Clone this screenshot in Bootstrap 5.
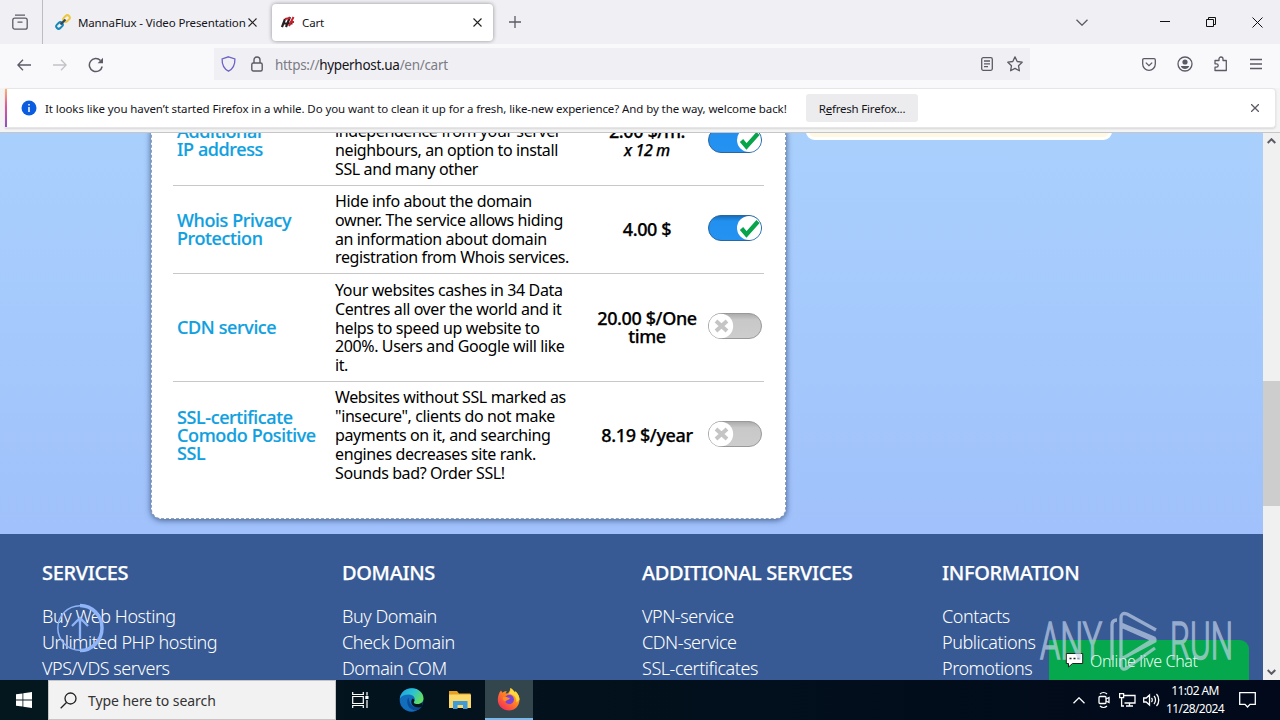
<!DOCTYPE html>
<html lang="en">
<head>
  <meta charset="UTF-8">
  <title>Cart</title>
  <meta name="viewport" content="width=device-width, initial-scale=1" />
  <link href="https://cdn.jsdelivr.net/npm/bootstrap@5.3.0/dist/css/bootstrap.min.css" rel="stylesheet" />
  <style>
    body {
      width: 1280px;
      height: 720px;
      overflow: hidden;
      font-family: "Noto Sans", sans-serif;
      font-size: 12px;
      line-height: 1.2;
      color: #15141a;
      background: #f7f7f8;
    }
    svg {
      display: block;
      flex: none;
      fill: none;
      stroke: #5b5b66;
      stroke-width: 1.3;
    }
    .text-line { white-space: nowrap; }

    /* browser chrome */
    .tab-strip { height: 44px; background: #f0f0f4; }
    .tab-pin { width: 43px; border-right: 1px solid #bcbcc4; padding-left: 12px; }
    .tab-item { height: 37px; font-size: 11.5px; letter-spacing: -0.13px; }
    .tab-back { width: 229px; padding-left: 12px; }
    .tab-title { width: 170px; margin-left: 7px; padding-top: 1px; }
    .tab-front {
      width: 221px;
      padding: 0 11px 0 9px;
      background: #fff;
      border-radius: 4px;
      box-shadow: 0 0 4px rgba(0, 0, 0, 0.4);
    }
    .tab-close { stroke: #222; stroke-width: 1.1; }
    .win-icon { stroke: #111; stroke-width: 1; }
    .tool-strip { height: 44px; background: #f9f9fb; }
    .address-box { width: 816px; height: 32px; margin-top: 4px; background: #f0f0f4; font-size: 13.5px; letter-spacing: -0.3px; color: #7c7c85; }
    .address-box b { font-weight: 400; color: #15141a; }
    .notice-strip { height: 45px; padding: 0 4px 4px 5px; border-bottom: 1px solid #c4c6ca; background: #f4f4f5; }
    .notice-box {
      height: 40px;
      background: #fff;
      border: 1px solid #e6e6e8;
      border-left: 0;
      border-radius: 0 4px 4px 0;
      box-shadow: 0 1px 2px rgba(0, 0, 0, 0.12);
      font-size: 11.5px;
    }
    .notice-edge { width: 2px; height: 38px; background: linear-gradient(#ffb26e, #e0559a 45%, #8a50c8); }
    .notice-text { width: 752px; margin-left: 8px; padding-top: 2px; letter-spacing: -0.095px; }
    .notice-btn { width: 112px; height: 28px; margin-left: 9px; padding-top: 2px; background: #ececee; border-radius: 3px; letter-spacing: -0.2px; }

    /* page */
    .page-view { height: 547px; }
    .page-area { width: 1263px; overflow: hidden; background: linear-gradient(#a9d0fd, #a0c1fb 401px); }
    .page-main { height: 401px; padding-left: 151px; }
    .order-box {
      width: 635px;
      height: 396px;
      margin-top: -10px;
      padding: 0 21px;
      overflow: hidden;
      background: #fff;
      border: 1px dashed #8ba3b2;
      border-radius: 10px;
      box-shadow: 0 1px 6px rgba(20, 40, 90, 0.7);
    }
    .order-row {
      display: grid;
      grid-template-columns: 158px 256px 112px 1fr;
      align-items: center;
      padding-left: 4px;
      width: 591px;
      border-bottom: 1px solid #c8c8c8;
      color: #000;
    }
    .order-row svg { margin: 0 0 4px 4px; }
    .row-ip { height: 89px; margin-top: -27px; }
    .row-whois { height: 88px; }
    .row-cdn { height: 108px; }
    .row-ssl { height: 107px; border: 0; }
    .svc-name { padding-bottom: 2px; font-size: 18px; line-height: 18px; font-weight: 500; letter-spacing: -0.38px; color: #109fe0; -webkit-text-stroke: 0.2px #109fe0; }
    .svc-text { font-size: 16px; line-height: 18.9px; letter-spacing: -0.39px; }
    .svc-price { padding-bottom: 2px; font-size: 18px; line-height: 18px; font-weight: 500; letter-spacing: -0.38px; text-align: center; -webkit-text-stroke: 0.25px #000; }
    .svc-price em { font-size: 16px; }
    .tip-box { width: 306px; height: 17px; margin: -10px 0 0 20px; background: #fff9e4; border: 3px solid #fff; border-radius: 12px; }
    .site-footer { height: 146px; padding: 27px 0 0 42px; background: #375a94; color: #fff; }
    .foot-col { width: 300px; flex: none; }
    .foot-head { font-size: 20px; line-height: 24px; font-weight: 500; letter-spacing: -0.34px; margin-bottom: 18px; -webkit-text-stroke: 0.25px #fff; }
    .foot-link { font-size: 18px; line-height: 26px; font-weight: 300; letter-spacing: -0.45px; }
    .scroll-rail { width: 17px; background: #f0f0f0; }
    .scroll-thumb { height: 125px; margin-top: 232px; background: #cdcdcd; }

    /* things that float over the page */
    .float-up { left: 56px; top: 603px; }
    .chat-tab {
      left: 1049px;
      top: 640px;
      width: 200px;
      height: 40px;
      padding-left: 16px;
      background: #05a84c;
      border-radius: 0 9px 0 0;
      color: #e9fff2;
      font-size: 16px;
      font-weight: 300;
      letter-spacing: -0.35px;
    }
    .chat-label { padding-left: 6px; }
    .stamp { left: 1036px; top: 606px; }

    /* taskbar */
    .task-strip { height: 40px; background: linear-gradient(90deg, #04171f, #020f1c 60%, #01091a); color: #fff; }
    .task-search { width: 288px; height: 40px; background: #f2f2f2; border: 1px solid #c5c5c5; color: #333; font-size: 14px; letter-spacing: -0.06px; }
    .task-app { width: 48px; height: 40px; margin-left: 1px; }
    .task-live { background: #33454d; border-bottom: 2px solid #76b9ed; }
    .task-strip .line-icon { stroke: #fff; }
    .clock { width: 62px; margin-left: 4px; font-size: 12px; line-height: 18px; letter-spacing: -0.6px; text-align: center; }
  </style>
</head>
<body class="d-flex flex-column">

<svg width="0" height="0" class="position-absolute">
  <defs>
    <linearGradient id="offShade" x2="0" y2="1"><stop offset="0" stop-color="#aaa"/><stop offset=".25" stop-color="#c8c8c8"/><stop offset="1" stop-color="#cdcdcd"/></linearGradient>
    <linearGradient id="onShade" x2="0" y2="1"><stop offset="0" stop-color="#1769b4"/><stop offset=".22" stop-color="#2190ef"/><stop offset="1" stop-color="#2592f2"/></linearGradient>
    <linearGradient id="foxShade" x1="1" x2=".2" y2="1"><stop offset="0" stop-color="#ffe14a"/><stop offset=".45" stop-color="#ff8a1f"/><stop offset="1" stop-color="#f5295b"/></linearGradient>
    <linearGradient id="edgeShade" x2="1" y2=".5"><stop offset="0" stop-color="#1b9de2"/><stop offset=".55" stop-color="#2cc3d0"/><stop offset="1" stop-color="#62dc62"/></linearGradient>
    <symbol id="toggleOn" viewBox="0 0 56 28">
      <rect x="1.500" y="1.500" width="53" height="25" rx="12.500" fill="url(#onShade)" stroke="#28679f" stroke-width="1"/>
      <circle cx="42" cy="14" r="12" fill="#fff" stroke="none"/>
      <path d="M34.500 14.500l5 6L51 7.500" stroke="#06a44b" stroke-width="4.300"/>
    </symbol>
    <symbol id="toggleOff" viewBox="0 0 56 28">
      <rect x="1.500" y="1.500" width="53" height="25" rx="12.500" fill="url(#offShade)" stroke="#999" stroke-width="1"/>
      <circle cx="14" cy="14" r="12.200" fill="#fff" stroke="none"/>
      <path d="M9 9l11 10M20 9L9 19" stroke="#c5c5c5" stroke-width="4"/>
    </symbol>
  </defs>
</svg>

<div class="tab-strip d-flex align-items-center">
  <div class="tab-pin h-100 d-flex align-items-center">
    <svg width="16" height="16" viewBox="0 0 16 16"><rect x=".8" y="4.200" width="14.400" height="11" rx="2"/><path d="M3 1.200h10M5.500 8.200h5"/></svg>
  </div>
  <div class="tab-item tab-back d-flex align-items-center">
    <svg width="16" height="16" viewBox="0 0 16 16"><rect x="-3.600" y="-2.400" width="7.200" height="4.800" rx="2.400" transform="translate(4.500 11.500) rotate(-45)" stroke="#1788b8" stroke-width="2"/><rect x="-3.600" y="-2.400" width="7.200" height="4.800" rx="2.400" transform="translate(11.500 4.500) rotate(-45)" stroke="#edc83c" stroke-width="2"/><path d="M5.500 10.500l5-5" stroke="#34475b" stroke-width="2.200"/></svg>
    <span class="text-line tab-title">MannaFlux - Video Presentation</span>
    <svg class="tab-close" width="9" height="9" viewBox="0 0 9 9"><path d="M.5.5l8 8M8.500.5l-8 8"/></svg>
  </div>
  <div class="tab-item tab-front d-flex align-items-center">
    <svg width="14" height="12" viewBox="0 0 14 12"><path d="M1 11L4 3M5 11l4-10M1.500 7.500h10" stroke="#2a2023" stroke-width="2.200"/><path d="M8 10l4.500-9M4 3l5-1M9 6h4" stroke="#c8202c" stroke-width="2"/></svg>
    <span class="text-line flex-grow-1" style="padding:1px 0 0 7px">Cart</span>
    <svg class="tab-close" width="9" height="9" viewBox="0 0 9 9"><path d="M.5.5l8 8M8.500.5l-8 8"/></svg>
  </div>
  <svg class="ms-3" width="12" height="12" viewBox="0 0 12 12"><path d="M6 0v12M0 6h12"/></svg>
  <div class="ms-auto d-flex align-items-center">
    <svg width="12" height="7" viewBox="0 0 12 7"><path d="M.5.7L6 6.200 11.500.7"/></svg>
    <svg class="win-icon" width="11" height="11" viewBox="0 0 11 11" style="margin-left:72px"><path d="M0 4.500h10"/></svg>
    <svg class="win-icon" width="11" height="11" viewBox="0 0 11 11" style="margin-left:35px"><path d="M.5 2.500h7v7h-7zM2.500 2.500v-2h7v7h-2"/></svg>
    <svg class="win-icon" width="11" height="11" viewBox="0 0 11 11" style="margin:0 17px 0 35px"><path d="M.5.5l10 10M10.500.5l-10 10"/></svg>
  </div>
</div>

<div class="tool-strip d-flex">
  <div class="d-flex align-items-center" style="width:214px;padding:0 0 3px 17px">
    <svg width="14" height="12" viewBox="0 0 14 12"><path d="M14 6H1M6 .7L.9 6 6 11.300"/></svg>
    <svg width="14" height="12" viewBox="0 0 14 12" style="margin-left:22px;stroke:#c2c2c8"><path d="M0 6h13M8 .7L13.100 6 8 11.300"/></svg>
    <svg width="16" height="16" viewBox="0 0 16 16" style="margin-left:21px;stroke-width:1.500"><path d="M14.200 9.500A6.500 6.500 0 1 1 12.500 3.500"/><path d="M15 .8v5.400H9.600z" fill="#5b5b66" stroke="none"/></svg>
  </div>
  <div class="address-box d-flex align-items-center">
    <svg width="15" height="16" viewBox="0 0 15 16" style="margin-left:7px;stroke:#6c63c9"><path d="M7.500.8L13.900 3c.2 6-1.400 9.600-6.400 12.200C2.500 12.600.9 9 1.100 3z"/></svg>
    <svg width="12" height="16" viewBox="0 0 12 16" style="margin-left:15px;stroke-width:1.400"><rect x=".8" y="7" width="10.400" height="8" rx="1.500"/><path d="M3 7V4a3 3 0 0 1 6 0v3"/></svg>
    <span class="text-line ms-2 ps-1 flex-grow-1" style="padding-top:2px">https://<b>hyperhost.ua</b>/en/cart</span>
    <svg width="12" height="14" viewBox="0 0 12 14"><rect x=".7" y=".7" width="10.600" height="12.600" rx="1.500"/><path d="M3 4h6M3 6.800h6M3 9.600h4"/></svg>
    <svg width="16" height="16" viewBox="0 0 16 16" style="margin:0 7px 0 14px"><path stroke-linejoin="round" d="M8 .9l2.200 4.600 5 .7-3.700 3.500.9 5.100L8 12.400l-4.400 2.400.9-5.100L.8 6.200l5-.7z"/></svg>
  </div>
  <div class="ms-auto d-flex align-items-center pb-1">
    <svg width="14" height="13" viewBox="0 0 14 13"><path d="M2 .7h10c.8 0 1.300.5 1.300 1.300V6a6.300 6.300 0 0 1-12.600 0V2C.7 1.200 1.200.7 2 .7zM3.800 4.600L7 7.600l3.200-3"/></svg>
    <svg width="16" height="16" viewBox="0 0 16 16" style="margin-left:21px"><circle cx="8" cy="8" r="7"/><circle cx="8" cy="6" r="2.600" fill="#5b5b66" stroke="none"/><path d="M3.800 10h8.400c-1 4-7.400 4-8.400 0z" fill="#5b5b66" stroke="none"/></svg>
    <svg width="14" height="16" viewBox="0 0 14 16" style="margin-left:21px"><path stroke-linejoin="round" d="M1 4.500h4V3a2 2 0 0 1 4 0v1.500h3.300v10H1v-3.300h1.500a1.700 1.700 0 0 0 0-3.400H1z"/></svg>
    <svg width="12" height="12" viewBox="0 0 12 12" style="margin:0 18px 0 22px"><path d="M0 1.500h12M0 6h12M0 10.500h12"/></svg>
  </div>
</div>

<div class="notice-strip">
  <div class="notice-box d-flex align-items-center">
    <div class="notice-edge"></div>
    <svg width="16" height="16" viewBox="0 0 16 16" style="margin-left:14px"><circle cx="8" cy="8" r="7.500" fill="#0a5de0" stroke="none"/><path d="M8 4v1.600M8 7v5" stroke="#fff" stroke-width="1.500"/></svg>
    <span class="text-line notice-text">It looks like you haven’t started Firefox in a while. Do you want to clean it up for a fresh, like-new experience? And by the way, welcome back!</span>
    <div class="notice-btn text-line d-flex align-items-center justify-content-center"><span>R<u>e</u>fresh Firefox...</span></div>
    <svg class="ms-auto me-3" width="8" height="8" viewBox="0 0 8 8"><path d="M0 0l8 8M8 0L0 8"/></svg>
  </div>
</div>

<div class="page-view d-flex">
  <div class="page-area">
    <div class="page-main d-flex align-items-start">
      <div class="order-box">
        <div class="order-row row-ip">
          <div class="svc-name">Additional<br>IP address</div>
          <div class="svc-text text-line"><br>independence from your server<br>neighbours, an option to install<br>SSL and many other</div>
          <div class="svc-price">2.00 $/m.<br><em>x 12 m</em></div>
          <svg width="56" height="28" style="margin-bottom:2px"><use href="#toggleOn"/></svg>
        </div>
        <div class="order-row row-whois">
          <div class="svc-name">Whois Privacy<br>Protection</div>
          <div class="svc-text text-line">Hide info about the domain<br>owner. The service allows hiding<br>an information about domain<br>registration from Whois services.</div>
          <div class="svc-price">4.00 $</div>
          <svg width="56" height="28"><use href="#toggleOn"/></svg>
        </div>
        <div class="order-row row-cdn">
          <div class="svc-name">CDN service</div>
          <div class="svc-text text-line" style="padding-top:1px">Your websites cashes in 34 Data<br>Centres all over the world and it<br>helps to speed up website to<br>200%. Users and Google will like<br>it.</div>
          <div class="svc-price">20.00 $/One<br>time</div>
          <svg width="56" height="28"><use href="#toggleOff"/></svg>
        </div>
        <div class="order-row row-ssl">
          <div class="svc-name text-line">SSL-certificate<br>Comodo Positive<br>SSL</div>
          <div class="svc-text text-line">Websites without SSL marked as<br>"insecure", clients do not make<br>payments on it, and searching<br>engines decreases site rank.<br>Sounds bad? Order SSL!</div>
          <div class="svc-price">8.19 $/year</div>
          <svg width="56" height="28"><use href="#toggleOff"/></svg>
        </div>
      </div>
      <div class="tip-box"></div>
    </div>
    <div class="site-footer d-flex">
      <div class="foot-col">
        <div class="foot-head">SERVICES</div>
        <div class="foot-link">Buy Web Hosting</div>
        <div class="foot-link">Unlimited PHP hosting</div>
        <div class="foot-link">VPS/VDS servers</div>
      </div>
      <div class="foot-col">
        <div class="foot-head">DOMAINS</div>
        <div class="foot-link">Buy Domain</div>
        <div class="foot-link">Check Domain</div>
        <div class="foot-link">Domain COM</div>
      </div>
      <div class="foot-col">
        <div class="foot-head">ADDITIONAL SERVICES</div>
        <div class="foot-link">VPN-service</div>
        <div class="foot-link">CDN-service</div>
        <div class="foot-link">SSL-certificates</div>
      </div>
      <div class="foot-col">
        <div class="foot-head">INFORMATION</div>
        <div class="foot-link">Contacts</div>
        <div class="foot-link">Publications</div>
        <div class="foot-link">Promotions</div>
      </div>
    </div>
  </div>
  <div class="scroll-rail d-flex flex-column align-items-center">
    <svg width="9" height="6" viewBox="0 0 9 6" style="margin-top:5px;margin-bottom:5px;stroke-width:2"><path d="M.7 5l3.800-3.800L8.300 5"/></svg>
    <div class="scroll-thumb w-100"></div>
    <svg class="mt-auto" width="9" height="6" viewBox="0 0 9 6" style="margin-bottom:5px;stroke-width:2"><path d="M.7 1l3.800 3.800L8.300 1"/></svg>
  </div>
</div>

<div class="task-strip d-flex align-items-center">
  <svg width="16" height="16" viewBox="0 0 16 16" style="margin:0 16px 0 16px;fill:#fff;stroke:none"><path d="M0 2.300l6.500-.9v6.200H0zM7.300 1.300L16 0v7.600H7.300zM0 8.400h6.500v6.200L0 13.700zM7.300 8.400H16V16l-8.700-1.300z"/></svg>
  <div class="task-search d-flex align-items-center">
    <svg width="17" height="17" viewBox="0 0 17 17" style="margin:0 11px;stroke:#222"><circle cx="10.500" cy="6.500" r="5.500"/><path d="M6.500 10.500L.7 16.300"/></svg>
    <span class="text-line" style="padding-top:2px">Type here to search</span>
  </div>
  <div class="task-app d-flex align-items-center justify-content-center ms-0">
    <svg class="line-icon" width="17" height="16" viewBox="0 0 17 16"><path d="M.7 0v2.500h10.600V0M.7 16v-2.500h10.600V16M.7 4.500h10.600v7H.7zM15 0v3.500M15 8v8" stroke-width="1.200"/><rect x="13.300" y="4" width="3.200" height="3" fill="#fff" stroke="none"/></svg>
  </div>
  <div class="task-app d-flex align-items-center justify-content-center" style="margin-left:3px">
    <svg width="25" height="24" viewBox="0 0 25 24" style="stroke:none"><circle cx="12.500" cy="12" r="11.800" fill="#126dbd"/><path d="M.8 10.500C2 3.500 7 .2 12.800.2c7 0 12 5 11.700 10.600-.2 4-3.800 5.700-7.300 5.200-2-.3-3-1.200-2.200-2.300 2.500-3.500-1-7.200-5-7.200-4.500 0-7.500 1.500-9.200 4z" fill="url(#edgeShade)"/><path d="M9.500 9.500c-2.500 3-1.500 10.500 5 12.500 3.500 1 6.500-.5 8.500-3.500-4.500 2-12.500 1.500-13.500-9z" fill="#0b4a94"/><path d="M15 13.700c-.8 1.100.2 2 2.200 2.300 2.500.4 5.300-.3 6.500-2.200l-.7 4.700c-3 1.800-8 1-10-2-1.200-2-.8-4.500.5-6 1.500.5 2.500 1.800 1.500 3.200z" fill="#04171f"/></svg>
  </div>
  <div class="task-app d-flex align-items-center justify-content-center">
    <svg width="22" height="20" viewBox="0 0 22 20" style="stroke:none"><path d="M0 1h8l2 2.500h11.500V18H0z" fill="#e8a021"/><path d="M0 4.500h22V18H0z" fill="#fbd869"/><path d="M4 11h14.500v8H14v-4H8.500v4H4z" fill="#3f9bd8"/></svg>
  </div>
  <div class="task-app task-live d-flex align-items-center justify-content-center">
    <svg width="24" height="24" viewBox="0 0 24 24" style="stroke:none"><path d="M2.500 5.500L4 3.500l1.500 2.200C7 4.500 8.300 4.200 9.800 4.300L8.500 6.500c3 0 4-1 5-5.500 2 1 3 3 4.500 4.200l.5-1c2.500 2.500 4 5.500 4 8.300C22.500 19 18 23.500 12 23.500S.8 19 .8 13c0-2.500.5-5 1.700-7.500z" fill="url(#foxShade)"/><path d="M13.500 1c2 1 3 3 4.500 4.200l.5-1c2.500 2.500 4 5.500 4 8.300l-3 3c.5-5-2.500-8-7.500-9 1-1.500 1.500-3 1.500-5.500z" fill="#ffd83e"/><circle cx="12.300" cy="12.500" r="4.700" fill="#7b44d8"/><path d="M5.500 10.500c3-2 4.500 0 7.500.5-1 2.500-4 1.500-4 3.500-2.500 0-3.500-2-3.500-4z" fill="#ff8b22"/></svg>
  </div>
  <div class="ms-auto d-flex align-items-center">
    <svg class="line-icon" width="12" height="7" viewBox="0 0 12 7"><path d="M.5 6.300L6 .8l5.500 5.500"/></svg>
    <svg class="line-icon" width="12" height="16" viewBox="0 0 12 16" style="margin-left:13px"><rect x="1" y="4.500" width="7" height="7" rx="1"/><path d="M8 7l3-1.500v5L8 9M2 2c2-1.800 5-1.800 7 0M2 14c2 1.800 5 1.800 7 0"/></svg>
    <svg class="line-icon" width="17" height="14" viewBox="0 0 17 14" style="margin-left:9px"><path d="M5 2.500h11v7.500H5.500M10.500 10v3M7 13h7M.6.6h4v4h-4zM2.600 4.600V13H5"/></svg>
    <svg class="line-icon" width="17" height="14" viewBox="0 0 17 14" style="margin-left:7px"><path d="M.7 5h2.500L6.500 2v10L3.200 9H.7zM8.500 5c1 1 1 3 0 4M11 3c2 2 2 6 0 8M13.500 1c3 3 3 9 0 12"/></svg>
    <div class="clock text-line">11:02 AM<br>11/28/2024</div>
    <svg class="line-icon" width="17" height="16" viewBox="0 0 17 16" style="margin:0 24px 0 13px"><path d="M.7.7h15.600v11.600H11L8.500 15 6 12.300H.7z"/></svg>
  </div>
</div>

<div class="position-absolute float-up">
  <svg width="48" height="50" viewBox="0 0 48 50" style="stroke:#8fb5f8"><circle cx="24" cy="25" r="22.200" stroke-width="1.500"/><path d="M24 2.500a22 22.500 0 0 1 0 45" stroke-width="3.500"/><path d="M24 36V15M16 23l8-8 8 8" stroke-width="2.300"/></svg>
</div>
<div class="position-absolute chat-tab d-flex align-items-center">
  <svg width="19" height="16" viewBox="0 0 18 16" style="fill:#fff;stroke:#222;stroke-width:1"><path d="M.8 1.500h16.400v10H7L3 15v-3.500H.8z"/><path d="M4 6.500h2M8 6.500h2M12 6.500h2" stroke-width="1.600"/></svg>
  <span class="text-line chat-label pt-1">Online live Chat</span>
</div>
<div class="position-absolute stamp">
  <svg width="200" height="70" viewBox="0 0 200 70" opacity=".66" style="stroke:#c9d6ec;stroke-width:3.300">
    <g fill="#c9d6ec" stroke-width="1.700" font-family="Roboto, sans-serif" font-weight="300" font-size="52">
      <text x="4" y="53" textLength="62" lengthAdjust="spacingAndGlyphs">ANY</text>
      <text x="134" y="53" textLength="63" lengthAdjust="spacingAndGlyphs">RUN</text>
    </g>
    <path stroke-linejoin="round" d="M76 54V19q0-5 5-5M85 54V12q0-6 6-4L120 24M85 18l33 14M85 12v8l34 15-32 17M120 32L91 50M85 52v8q1 5 6 2l28-20"/>
  </svg>
</div>

<script src="https://cdn.jsdelivr.net/npm/bootstrap@5.3.0/dist/js/bootstrap.bundle.min.js"></script>
</body>
</html>
